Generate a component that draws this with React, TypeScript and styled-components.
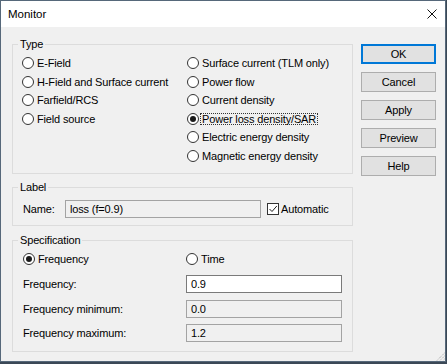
import React from "react";
import styled, { createGlobalStyle } from "styled-components";

const Global = createGlobalStyle`
  html, body { margin: 0; padding: 0; background: #3b4856; }
  body {
    font-family: "Liberation Sans", Arial, sans-serif;
    font-size: 11px;
    letter-spacing: -0.15px;
    color: #000;
  }
  * { box-sizing: border-box; }
`;

const Window = styled.div`
  width: 446px;
  height: 362px;
  border: 1px solid #56687a;
  background: #f0f0f0;
  display: flex;
  flex-direction: column;
  position: relative;
`;

const TitleBar = styled.div`
  height: 26px;
  flex: none;
  background: #fff;
  display: flex;
  align-items: center;
  justify-content: space-between;
  padding: 0 8px 0 7px;
`;

const Title = styled.span`
  font-size: 11.5px;
  letter-spacing: 0;
  color: #000;
`;

const Body = styled.div`
  display: flex;
  gap: 8px;
  padding: 17px 9px 0 11px;
`;

const Main = styled.div`
  width: 341px;
  display: flex;
  flex-direction: column;
`;

const Group = styled.div<{ $mt?: number }>`
  border: 1px solid #dcdcdc;
  display: flex;
  flex-direction: column;
  margin-top: ${(p) => p.$mt ?? 0}px;
`;

const Legend = styled.div`
  align-self: flex-start;
  margin: -7px 0 0 5px;
  padding: 0 2px;
  height: 13px;
  line-height: 13px;
  background: #f0f0f0;
`;

const TypeColumns = styled.div`
  display: flex;
  padding: 3px 0 8px 9px;
`;

const RadioColumn = styled.div<{ $w?: number }>`
  display: flex;
  flex-direction: column;
  width: ${(p) => (p.$w ? `${p.$w}px` : "auto")};
`;

const RadioRow = styled.label<{ $h?: number }>`
  display: flex;
  align-items: center;
  gap: 3px;
  height: ${(p) => p.$h ?? 18.5}px;
  white-space: nowrap;
`;

const Circle = styled.span<{ $on?: boolean }>`
  width: 12px;
  height: 12px;
  flex: none;
  border-radius: 50%;
  border: 1px solid #333;
  background: #fff;
  display: flex;
  align-items: center;
  justify-content: center;
  &::after {
    content: "";
    display: ${(p) => (p.$on ? "block" : "none")};
    width: 6px;
    height: 6px;
    border-radius: 50%;
    background: #1a1a1a;
  }
`;

const FocusText = styled.span`
  margin-left: -2px;
  padding: 0 1px;
  border: 1px dotted #333;
  line-height: 10px;
`;

const NameRow = styled.div`
  display: flex;
  align-items: center;
  padding: 6px 0 7px 10px;
`;

const FieldLabel = styled.span<{ $w: number }>`
  width: ${(p) => p.$w}px;
  flex: none;
`;

const TextBox = styled.div<{ $w: number; $white?: boolean }>`
  width: ${(p) => p.$w}px;
  height: 18px;
  flex: none;
  border: 1px solid ${(p) => (p.$white ? "#7a7a7a" : "#a3a3a3")};
  background: ${(p) => (p.$white ? "#fff" : "#f0f0f0")};
  padding: 0 4px;
  display: flex;
  align-items: center;
`;

const CheckLabel = styled.label`
  display: flex;
  align-items: center;
  gap: 2px;
  margin-left: 6px;
`;

const CheckBox = styled.span`
  width: 12px;
  height: 12px;
  border: 1px solid #333;
  background: #fff;
  display: flex;
  align-items: center;
  justify-content: center;
`;

const SpecBody = styled.div`
  display: flex;
  flex-direction: column;
  padding: 3px 0 9px 10px;
`;

const SpecRow = styled.div<{ $mt?: number; $h?: number }>`
  display: flex;
  align-items: center;
  height: ${(p) => p.$h ?? 18}px;
  margin-top: ${(p) => p.$mt ?? 0}px;
`;

const SpecCell = styled.div`
  width: 163px;
  flex: none;
`;

const Buttons = styled.div`
  width: 75px;
  display: flex;
  flex-direction: column;
  gap: 8px;
`;

const Button = styled.button<{ $default?: boolean }>`
  width: 75px;
  height: 20px;
  padding: 0;
  font-family: "Liberation Sans", Arial, sans-serif;
  font-size: 11px;
  letter-spacing: -0.15px;
  color: #000;
  background: #e1e1e1;
  border: 1px solid ${(p) => (p.$default ? "#0078d7" : "#adadad")};
  box-shadow: ${(p) => (p.$default ? "inset 0 0 0 1px #0078d7" : "none")};
`;

const Grip = styled.svg`
  position: absolute;
  right: 0;
  bottom: 0;
`;

const CloseIcon = () => (
  <svg width="10" height="10" viewBox="0 0 10 10">
    <path d="M0.5 0.5 L9.5 9.5 M9.5 0.5 L0.5 9.5" stroke="#111" strokeWidth="1" fill="none" />
  </svg>
);

const Radio = ({ on, children, h }: { on?: boolean; children: React.ReactNode; h?: number }) => (
  <RadioRow $h={h}>
    <Circle $on={on} />
    {children}
  </RadioRow>
);

export default function App() {
  return (
    <>
      <Global />
      <Window>
        <TitleBar>
          <Title>Monitor</Title>
          <CloseIcon />
        </TitleBar>
        <Body>
          <Main>
            <Group>
              <Legend>Type</Legend>
              <TypeColumns>
                <RadioColumn $w={165}>
                  <Radio>E-Field</Radio>
                  <Radio>H-Field and Surface current</Radio>
                  <Radio>Farfield/RCS</Radio>
                  <Radio>Field source</Radio>
                </RadioColumn>
                <RadioColumn>
                  <Radio>Surface current (TLM only)</Radio>
                  <Radio>Power flow</Radio>
                  <Radio>Current density</Radio>
                  <Radio on>
                    <FocusText>Power loss density/SAR</FocusText>
                  </Radio>
                  <Radio>Electric energy density</Radio>
                  <Radio>Magnetic energy density</Radio>
                </RadioColumn>
              </TypeColumns>
            </Group>
            <Group $mt={13}>
              <Legend>Label</Legend>
              <NameRow>
                <FieldLabel $w={42}>Name:</FieldLabel>
                <TextBox $w={196}>loss (f=0.9)</TextBox>
                <CheckLabel>
                  <CheckBox>
                    <svg width="10" height="10" viewBox="0 0 10 10">
                      <path d="M1.5 5 L4 7.5 L8.8 2" stroke="#222" strokeWidth="1" fill="none" />
                    </svg>
                  </CheckBox>
                  Automatic
                </CheckLabel>
              </NameRow>
            </Group>
            <Group $mt={14}>
              <Legend>Specification</Legend>
              <SpecBody>
                <SpecRow>
                  <SpecCell>
                    <Radio on h={18}>Frequency</Radio>
                  </SpecCell>
                  <Radio h={18}>Time</Radio>
                </SpecRow>
                <SpecRow $mt={7}>
                  <SpecCell>Frequency:</SpecCell>
                  <TextBox $w={156} $white>0.9</TextBox>
                </SpecRow>
                <SpecRow $mt={7}>
                  <SpecCell>Frequency minimum:</SpecCell>
                  <TextBox $w={156}>0.0</TextBox>
                </SpecRow>
                <SpecRow $mt={6}>
                  <SpecCell>Frequency maximum:</SpecCell>
                  <TextBox $w={156}>1.2</TextBox>
                </SpecRow>
              </SpecBody>
            </Group>
          </Main>
          <Buttons>
            <Button $default>OK</Button>
            <Button>Cancel</Button>
            <Button>Apply</Button>
            <Button>Preview</Button>
            <Button>Help</Button>
          </Buttons>
        </Body>
        <Grip width="9" height="9" viewBox="0 0 9 9">
          <path d="M8.5 1 L1 8.5 M8.5 4 L4 8.5 M8.5 7 L7 8.5" stroke="#9a9a9a" strokeWidth="1" strokeDasharray="1 1" fill="none" />
        </Grip>
      </Window>
    </>
  );
}
